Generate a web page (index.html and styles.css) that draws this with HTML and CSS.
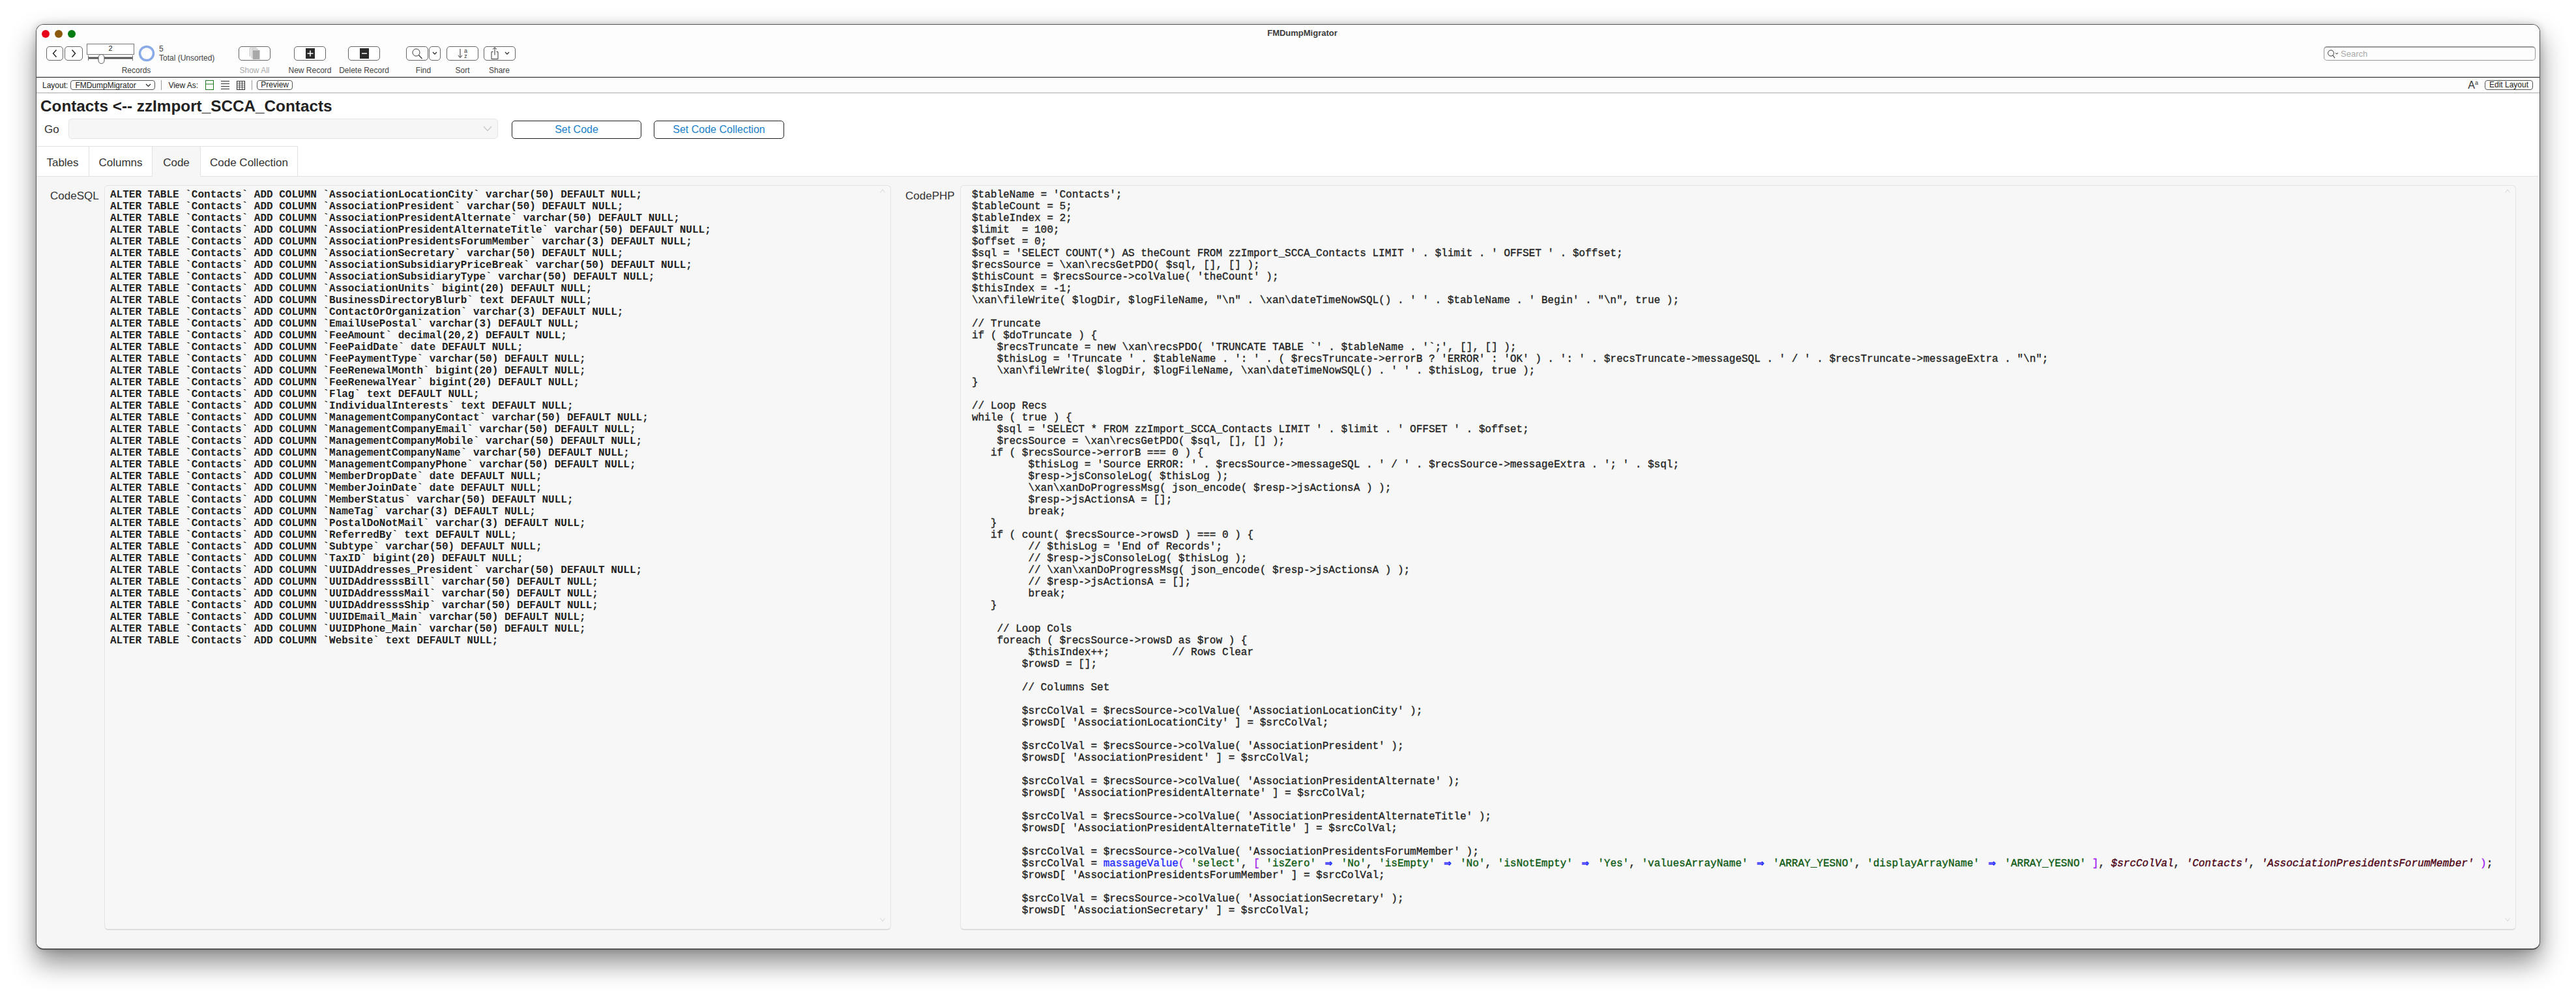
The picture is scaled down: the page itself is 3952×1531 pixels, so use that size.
FILE: index.html
```html
<!DOCTYPE html>
<html lang="en">
<head>
<meta charset="utf-8">
<title>FMDumpMigrator</title>
<link rel="stylesheet" href="styles.css">
</head>
<body>
<div class="window">
  <header class="titlebar">
    <div class="lights"><span class="light red"></span><span class="light amber"></span><span class="light green"></span></div>
    <div class="wintitle">FMDumpMigrator</div>
    <div></div>
  </header>

  <div class="toolbar">
    <div class="tool t-records">
      <div class="records-row">
        <button class="btn nav-prev"><svg width="10" height="14" viewBox="0 0 10 14"><path d="M7.5 1.5 2.5 7l5 5.5" fill="none" stroke="#222" stroke-width="1.4"/></svg></button>
        <button class="btn nav-next"><svg width="10" height="14" viewBox="0 0 10 14"><path d="M2.5 1.5 7.5 7l-5 5.5" fill="none" stroke="#222" stroke-width="1.4"/></svg></button>
        <div class="rec-control">
          <div class="rec-field">2</div>
          <svg class="slider" width="73" height="15" viewBox="0 0 73 15"><rect x="2" y="4.5" width="69" height="3" fill="#555"/><path d="M2.5 2v8M70.5 2v8" stroke="#777"/><rect x="18" y="0.5" width="9" height="14" rx="4.5" fill="#fff" stroke="#555"/></svg>
        </div>
        <svg class="ring" width="26" height="26" viewBox="0 0 26 26"><circle cx="13" cy="13" r="10.5" fill="none" stroke="#8aabe8" stroke-width="3.5"/></svg>
        <div class="rec-count"><div>5</div><div>Total (Unsorted)</div></div>
      </div>
      <div class="tool-label">Records</div>
    </div>

    <div class="tool t-showall">
      <button class="btn tbtn"><svg width="22" height="20" viewBox="0 0 22 20"><path d="M3.5 1.5h10M3.5 1.5v13M6 3.5h10M6 3.5v14" fill="none" stroke="#b5b5b5"/><rect x="7.5" y="5" width="11" height="14" fill="#a8a8a8"/></svg></button>
      <div class="tool-label dim">Show All</div>
    </div>
    <div class="tool t-new">
      <button class="btn tbtn"><svg width="14" height="16" viewBox="0 0 14 16"><rect width="14" height="16" fill="#2b2b2b"/><path d="M7 3.5v9M2.5 8h9" stroke="#fff" stroke-width="1.5"/></svg></button>
      <div class="tool-label">New Record</div>
    </div>
    <div class="tool t-delete">
      <button class="btn tbtn"><svg width="14" height="16" viewBox="0 0 14 16"><rect width="14" height="16" fill="#2b2b2b"/><path d="M3 8h8" stroke="#fff" stroke-width="1.5"/></svg></button>
      <div class="tool-label">Delete Record</div>
    </div>
    <div class="tool t-find">
      <div class="find-row">
        <button class="btn find-btn"><svg width="18" height="18" viewBox="0 0 18 18"><circle cx="7.5" cy="7.5" r="5.5" fill="none" stroke="#333"/><path d="M11.5 11.5l5 5.5" stroke="#333" stroke-width="1.2"/></svg></button>
        <button class="btn find-menu"><svg width="8" height="6" viewBox="0 0 8 6"><path d="M1 1l3 3 3-3" fill="none" stroke="#333" stroke-width="1.4"/></svg></button>
      </div>
      <div class="tool-label">Find</div>
    </div>
    <div class="tool t-sort">
      <button class="btn tbtn sort-btn">
        <svg width="8" height="16" viewBox="0 0 8 16"><path d="M4 1v13M1 11l3 3.5L7 11" fill="none" stroke="#333"/></svg>
        <span class="sort-az"><span>a</span><span>z</span></span>
      </button>
      <div class="tool-label">Sort</div>
    </div>
    <div class="tool t-share">
      <button class="btn tbtn share-btn">
        <svg width="12" height="20" viewBox="0 0 12 20"><path d="M3.5 7.5H1v11h10v-11H8.5M6 12.5V1M3 3.5 6 .8l3 2.7" fill="none" stroke="#333"/></svg>
        <svg class="share-chev" width="8" height="6" viewBox="0 0 8 6"><path d="M1 1l3 3 3-3" fill="none" stroke="#333" stroke-width="1.3"/></svg>
      </button>
      <div class="tool-label">Share</div>
    </div>

    <div class="search">
      <svg width="18" height="16" viewBox="0 0 18 16"><circle cx="6" cy="6.5" r="4.5" fill="none" stroke="#333"/><path d="M9 10l3 4" stroke="#333" stroke-width="1.1"/><path d="M13 6l2 2 2-2" fill="none" stroke="#333"/></svg>
      <span>Search</span>
    </div>
  </div>

  <div class="statusbar">
    <span class="st-label">Layout:</span>
    <div class="layout-select"><span>FMDumpMigrator</span><svg width="9" height="6" viewBox="0 0 9 6"><path d="M1 1l3.5 3.5L8 1" fill="none" stroke="#222" stroke-width="1.2"/></svg></div>
    <span class="st-sep"></span>
    <span class="st-label">View As:</span>
    <svg class="va-first" width="13" height="15" viewBox="0 0 13 15"><rect x=".5" y=".5" width="12" height="14" fill="none" stroke="#1c7a1c"/><path d="M0 6h13" stroke="#1c7a1c"/></svg>
    <svg class="va" width="13" height="15" viewBox="0 0 13 15"><path d="M0 1.5h13M0 5.5h13M0 9.5h13M0 13.5h13" stroke="#333"/></svg>
    <svg class="va" width="13" height="15" viewBox="0 0 13 15"><rect x=".5" y="1.5" width="12" height="13" fill="none" stroke="#333"/><path d="M0 4.5h13M0 7.5h13M0 10.5h13M4.5 2v12M8.5 2v12" stroke="#333" stroke-width=".8"/></svg>
    <span class="st-sep sep2"></span>
    <button class="pill preview">Preview</button>
    <span class="aa">A<sup>a</sup></span>
    <button class="pill edit">Edit Layout</button>
  </div>

  <main class="content">
    <h1 class="heading">Contacts &lt;-- zzImport_SCCA_Contacts</h1>
    <div class="go-row">
      <label class="go-label">Go</label>
      <div class="go-select"><svg width="14" height="9" viewBox="0 0 14 9"><path d="M1 1l6 6.5L13 1" fill="none" stroke="#c8c8c8" stroke-width="1.2"/></svg></div>
      <button class="action a1">Set Code</button>
      <button class="action a2">Set Code Collection</button>
    </div>
    <nav class="tabs">
      <div class="tab tab-tables">Tables</div>
      <div class="tab tab-columns">Columns</div>
      <div class="tab tab-code active">Code</div>
      <div class="tab tab-coll">Code Collection</div>
    </nav>
    <section class="panel">
      <div class="field field-sql">
        <div class="field-label">CodeSQL</div>
        <div class="codebox">
<svg class="sc sc-up" width="8" height="6" viewBox="0 0 8 6"><path d="M.5 5.5 4 .8l3.5 4.7" fill="none" stroke="#d4d4d4"/></svg>
<pre class="code sql">ALTER TABLE `Contacts` ADD COLUMN `AssociationLocationCity` varchar(50) DEFAULT NULL;
ALTER TABLE `Contacts` ADD COLUMN `AssociationPresident` varchar(50) DEFAULT NULL;
ALTER TABLE `Contacts` ADD COLUMN `AssociationPresidentAlternate` varchar(50) DEFAULT NULL;
ALTER TABLE `Contacts` ADD COLUMN `AssociationPresidentAlternateTitle` varchar(50) DEFAULT NULL;
ALTER TABLE `Contacts` ADD COLUMN `AssociationPresidentsForumMember` varchar(3) DEFAULT NULL;
ALTER TABLE `Contacts` ADD COLUMN `AssociationSecretary` varchar(50) DEFAULT NULL;
ALTER TABLE `Contacts` ADD COLUMN `AssociationSubsidiaryPriceBreak` varchar(50) DEFAULT NULL;
ALTER TABLE `Contacts` ADD COLUMN `AssociationSubsidiaryType` varchar(50) DEFAULT NULL;
ALTER TABLE `Contacts` ADD COLUMN `AssociationUnits` bigint(20) DEFAULT NULL;
ALTER TABLE `Contacts` ADD COLUMN `BusinessDirectoryBlurb` text DEFAULT NULL;
ALTER TABLE `Contacts` ADD COLUMN `ContactOrOrganization` varchar(3) DEFAULT NULL;
ALTER TABLE `Contacts` ADD COLUMN `EmailUsePostal` varchar(3) DEFAULT NULL;
ALTER TABLE `Contacts` ADD COLUMN `FeeAmount` decimal(20,2) DEFAULT NULL;
ALTER TABLE `Contacts` ADD COLUMN `FeePaidDate` date DEFAULT NULL;
ALTER TABLE `Contacts` ADD COLUMN `FeePaymentType` varchar(50) DEFAULT NULL;
ALTER TABLE `Contacts` ADD COLUMN `FeeRenewalMonth` bigint(20) DEFAULT NULL;
ALTER TABLE `Contacts` ADD COLUMN `FeeRenewalYear` bigint(20) DEFAULT NULL;
ALTER TABLE `Contacts` ADD COLUMN `Flag` text DEFAULT NULL;
ALTER TABLE `Contacts` ADD COLUMN `IndividualInterests` text DEFAULT NULL;
ALTER TABLE `Contacts` ADD COLUMN `ManagementCompanyContact` varchar(50) DEFAULT NULL;
ALTER TABLE `Contacts` ADD COLUMN `ManagementCompanyEmail` varchar(50) DEFAULT NULL;
ALTER TABLE `Contacts` ADD COLUMN `ManagementCompanyMobile` varchar(50) DEFAULT NULL;
ALTER TABLE `Contacts` ADD COLUMN `ManagementCompanyName` varchar(50) DEFAULT NULL;
ALTER TABLE `Contacts` ADD COLUMN `ManagementCompanyPhone` varchar(50) DEFAULT NULL;
ALTER TABLE `Contacts` ADD COLUMN `MemberDropDate` date DEFAULT NULL;
ALTER TABLE `Contacts` ADD COLUMN `MemberJoinDate` date DEFAULT NULL;
ALTER TABLE `Contacts` ADD COLUMN `MemberStatus` varchar(50) DEFAULT NULL;
ALTER TABLE `Contacts` ADD COLUMN `NameTag` varchar(3) DEFAULT NULL;
ALTER TABLE `Contacts` ADD COLUMN `PostalDoNotMail` varchar(3) DEFAULT NULL;
ALTER TABLE `Contacts` ADD COLUMN `ReferredBy` text DEFAULT NULL;
ALTER TABLE `Contacts` ADD COLUMN `Subtype` varchar(50) DEFAULT NULL;
ALTER TABLE `Contacts` ADD COLUMN `TaxID` bigint(20) DEFAULT NULL;
ALTER TABLE `Contacts` ADD COLUMN `UUIDAddresses_President` varchar(50) DEFAULT NULL;
ALTER TABLE `Contacts` ADD COLUMN `UUIDAddresssBill` varchar(50) DEFAULT NULL;
ALTER TABLE `Contacts` ADD COLUMN `UUIDAddresssMail` varchar(50) DEFAULT NULL;
ALTER TABLE `Contacts` ADD COLUMN `UUIDAddresssShip` varchar(50) DEFAULT NULL;
ALTER TABLE `Contacts` ADD COLUMN `UUIDEmail_Main` varchar(50) DEFAULT NULL;
ALTER TABLE `Contacts` ADD COLUMN `UUIDPhone_Main` varchar(50) DEFAULT NULL;
ALTER TABLE `Contacts` ADD COLUMN `Website` text DEFAULT NULL;</pre>
<svg class="sc sc-down" width="8" height="6" viewBox="0 0 8 6"><path d="M.5.5 4 5.2 7.5.5" fill="none" stroke="#d4d4d4"/></svg>
        </div>
      </div>
      <div class="field field-php">
        <div class="field-label">CodePHP</div>
        <div class="codebox">
<svg class="sc sc-up" width="8" height="6" viewBox="0 0 8 6"><path d="M.5 5.5 4 .8l3.5 4.7" fill="none" stroke="#d4d4d4"/></svg>
<pre class="code php">$tableName = 'Contacts';
$tableCount = 5;
$tableIndex = 2;
$limit  = 100;
$offset = 0;
$sql = 'SELECT COUNT(*) AS theCount FROM zzImport_SCCA_Contacts LIMIT ' . $limit . ' OFFSET ' . $offset;
$recsSource = \xan\recsGetPDO( $sql, [], [] );
$thisCount = $recsSource-&gt;colValue( 'theCount' );
$thisIndex = -1;
\xan\fileWrite( $logDir, $logFileName, "\n" . \xan\dateTimeNowSQL() . ' ' . $tableName . ' Begin' . "\n", true );

// Truncate
if ( $doTruncate ) {
    $recsTruncate = new \xan\recsPDO( 'TRUNCATE TABLE `' . $tableName . '`;', [], [] );
    $thisLog = 'Truncate ' . $tableName . ': ' . ( $recsTruncate-&gt;errorB ? 'ERROR' : 'OK' ) . ': ' . $recsTruncate-&gt;messageSQL . ' / ' . $recsTruncate-&gt;messageExtra . "\n";
    \xan\fileWrite( $logDir, $logFileName, \xan\dateTimeNowSQL() . ' ' . $thisLog, true );
}

// Loop Recs
while ( true ) {
    $sql = 'SELECT * FROM zzImport_SCCA_Contacts LIMIT ' . $limit . ' OFFSET ' . $offset;
    $recsSource = \xan\recsGetPDO( $sql, [], [] );
   if ( $recsSource-&gt;errorB === 0 ) {
         $thisLog = 'Source ERROR: ' . $recsSource-&gt;messageSQL . ' / ' . $recsSource-&gt;messageExtra . '; ' . $sql;
         $resp-&gt;jsConsoleLog( $thisLog );
         \xan\xanDoProgressMsg( json_encode( $resp-&gt;jsActionsA ) );
         $resp-&gt;jsActionsA = [];
         break;
   }
   if ( count( $recsSource-&gt;rowsD ) === 0 ) {
         // $thisLog = 'End of Records';
         // $resp-&gt;jsConsoleLog( $thisLog );
         // \xan\xanDoProgressMsg( json_encode( $resp-&gt;jsActionsA ) );
         // $resp-&gt;jsActionsA = [];
         break;
   }

    // Loop Cols
    foreach ( $recsSource-&gt;rowsD as $row ) {
         $thisIndex++;          // Rows Clear
        $rowsD = [];

        // Columns Set

        $srcColVal = $recsSource-&gt;colValue( 'AssociationLocationCity' );
        $rowsD[ 'AssociationLocationCity' ] = $srcColVal;

        $srcColVal = $recsSource-&gt;colValue( 'AssociationPresident' );
        $rowsD[ 'AssociationPresident' ] = $srcColVal;

        $srcColVal = $recsSource-&gt;colValue( 'AssociationPresidentAlternate' );
        $rowsD[ 'AssociationPresidentAlternate' ] = $srcColVal;

        $srcColVal = $recsSource-&gt;colValue( 'AssociationPresidentAlternateTitle' );
        $rowsD[ 'AssociationPresidentAlternateTitle' ] = $srcColVal;

        $srcColVal = $recsSource-&gt;colValue( 'AssociationPresidentsForumMember' );
        $srcColVal = <span class="fn">massageValue</span><span class="br">(</span> <span class="st">'select'</span>, <span class="br">[</span> <span class="st">'isZero'</span> <span class="ar">⇒</span> <span class="st">'No'</span>, <span class="st">'isEmpty'</span> <span class="ar">⇒</span> <span class="st">'No'</span>, <span class="st">'isNotEmpty'</span> <span class="ar">⇒</span> <span class="st">'Yes'</span>, <span class="st">'valuesArrayName'</span> <span class="ar">⇒</span> <span class="st">'ARRAY_YESNO'</span>, <span class="st">'displayArrayName'</span> <span class="ar">⇒</span> <span class="st">'ARRAY_YESNO'</span> <span class="br">]</span>, <span class="vr">$srcColVal</span>, <span class="vr">'Contacts'</span>, <span class="vr">'AssociationPresidentsForumMember'</span> <span class="br">)</span>;
        $rowsD[ 'AssociationPresidentsForumMember' ] = $srcColVal;

        $srcColVal = $recsSource-&gt;colValue( 'AssociationSecretary' );
        $rowsD[ 'AssociationSecretary' ] = $srcColVal;</pre>
<svg class="sc sc-down" width="8" height="6" viewBox="0 0 8 6"><path d="M.5.5 4 5.2 7.5.5" fill="none" stroke="#d4d4d4"/></svg>
        </div>
      </div>
    </section>
  </main>
</div>
</body>
</html>
```
FILE: styles.css
```css
* { box-sizing: border-box; }
html, body { margin: 0; height: 100%; overflow: hidden; background: #fff; }
body { font-family: "Liberation Sans", Arial, sans-serif; color: #222; }
button { font-family: inherit; margin: 0; padding: 0; background: #fff; }

.window {
  width: 3842px; height: 1420px; margin: 37px 0 0 55px;
  border: 1px solid #555; border-bottom-width: 2px; border-radius: 12px;
  background: #fff; overflow: hidden;
  display: flex; flex-direction: column;
  box-shadow: 0 20px 40px rgba(0,0,0,.45), 0 0 12px rgba(0,0,0,.18);
}

/* title bar */
.titlebar { height: 25px; flex: none; display: grid; grid-template-columns: 1fr auto 1fr; background: #fdfdfd; }
.lights { display: flex; gap: 8px; padding: 8px 0 0 8px; }
.light { width: 12px; height: 12px; border-radius: 50%; }
.red { background: #e6001a; }
.amber { background: #8b5a0c; }
.green { background: #037c12; }
.wintitle { font-size: 13px; font-weight: 700; color: #3c3c3c; line-height: 26px; padding-left: 44px; }

/* toolbar */
.toolbar { height: 55px; flex: none; display: flex; align-items: flex-start; padding: 8px 0 0 15px; background: #fdfdfd; }
.tool { display: flex; flex-direction: column; align-items: center; flex: none; }
.tool-label { font-size: 12px; line-height: 14px; margin-top: 8px; color: #444; white-space: nowrap; }
.tool-label.dim { color: #aaa; }
.btn { height: 22px; border: 1px solid #666; border-radius: 5px; display: flex; align-items: center; justify-content: center; flex: none; }
.tbtn { width: 49px; }

.t-records { width: 276px; }
.records-row { display: flex; align-self: flex-start; height: 22px; align-items: flex-start; }
.nav-prev { width: 26px; }
.nav-next { width: 28px; margin-left: 2px; }
.rec-control { width: 73px; margin: -4px 0 0 6px; display: flex; flex-direction: column; flex: none; }
.rec-field { height: 17px; border: 1px solid #777; font-size: 11px; line-height: 13px; text-align: center; background: #fff; }
.slider { display: block; margin-top: -1px; }
.ring { margin: -2px 0 0 6px; flex: none; }
.rec-count { margin: -3px 0 0 6px; font-size: 12px; line-height: 14px; color: #444; white-space: nowrap; }

.t-showall { width: 49px; margin-left: 19px; }
.t-new { width: 49px; margin-left: 36px; }
.t-delete { width: 49px; margin-left: 34px; }
.t-find { width: 53px; margin-left: 40px; }
.t-sort { width: 49px; margin-left: 9px; }
.t-share { width: 48px; margin-left: 8px; }
.find-row { display: flex; gap: 1px; }
.find-btn { width: 34px; }
.find-menu { width: 18px; }
.sort-btn { gap: 2px; }
.sort-az { display: flex; flex-direction: column; font-size: 9px; line-height: 8px; color: #333; }
.share-btn { gap: 9px; padding-left: 2px; }

.search {
  margin: 0 6px 0 auto; width: 325px; height: 22px;
  border: 1px solid #999; border-top-width: 2px; border-radius: 5px;
  display: flex; align-items: center; gap: 3px; padding-left: 4px;
  font-size: 13px; color: #aaa;
}

/* status bar */
.statusbar {
  height: 25px; flex: none; display: flex; align-items: center;
  border-top: 1px solid #111; border-bottom: 1px solid #aaa;
  padding-left: 9px; font-size: 12px; color: #222; background: #fdfdfd;
}
.st-label { white-space: nowrap; }
.layout-select {
  width: 130px; height: 15px; margin-left: 4px; border: 1px solid #555; border-radius: 4px;
  display: flex; align-items: center; justify-content: space-between; padding: 0 5px 0 6px;
}
.st-sep { width: 1px; height: 15px; background: #999; margin: 0 10px 0 9px; }
.sep2 { margin: 0 7px 0 10px; }
.va-first { margin-left: 11px; }
.va { margin-left: 11px; }
.pill { height: 15px; border: 1px solid #555; border-radius: 4px; font-size: 12px; line-height: 13px; color: #222; }
.preview { width: 55px; }
.aa { margin-left: auto; font-size: 16px; line-height: 16px; color: #333; }
.aa sup { font-size: 9px; vertical-align: 6px; line-height: 0; }
.edit { width: 74px; margin: 0 10px 0 10px; }

/* content */
.content { flex: 1; min-height: 0; display: flex; flex-direction: column; }
.heading { margin: 0; height: 39px; padding-left: 6px; font-size: 24.3px; line-height: 40px; font-weight: 700; color: #222; white-space: nowrap; }
.go-row { height: 31px; flex: none; display: flex; align-items: flex-end; }
.go-label { width: 49px; height: 31px; padding-left: 12px; font-size: 17px; line-height: 34px; color: #333; flex: none; }
.go-select {
  width: 659px; height: 31px; flex: none; background: #f6f6f6; border: 1px solid #e4e4e4; border-radius: 5px;
  display: flex; align-items: center; justify-content: flex-end; padding-right: 8px;
}
.action { height: 28px; border: 1px solid #222; border-radius: 5px; font-size: 16px; color: #1a80c8; flex: none; }
.a1 { width: 199px; margin-left: 21px; }
.a2 { width: 200px; margin-left: 19px; }

.tabs { height: 47px; flex: none; margin: 11px 2px 0 0; display: flex; border-bottom: 1px solid #e2e2e2; }
.tab { height: 46px; border-top: 1px solid #e2e2e2; border-right: 1px solid #e2e2e2; font-size: 17px; line-height: 50px; color: #333; text-align: center; flex: none; }
.tab-tables { width: 81px; }
.tab-columns { width: 97px; }
.tab-code { width: 74px; }
.tab-coll { width: 149px; }
.tab.active { background: #f6f6f6; height: 47px; margin-bottom: -1px; position: relative; }

.panel { flex: 1; min-height: 0; margin-right: 2px; background: #f6f6f6; display: flex; padding: 13px 34px 28px 21px; gap: 22px; }
.field { display: flex; flex: none; }
.field-sql { width: 1290px; }
.field-php { width: 2471px; }
.field-label { flex: none; font-size: 17px; line-height: 20px; padding-top: 7px; color: #333; white-space: nowrap; }
.field-sql .field-label { width: 83px; }
.field-php .field-label { width: 84px; }
.codebox { flex: 1; min-width: 0; position: relative; background: #f7f7f7; border: 1px solid #e4e4e4; border-bottom: 2px solid #ddd; border-radius: 6px; overflow: hidden; }
.code { margin: 0; font-family: "Liberation Mono", "Courier New", monospace; font-size: 16px; line-height: 18px; color: #222; }
.sql { font-weight: 700; padding: 5px 0 0 8px; }
.php { font-weight: 400; -webkit-text-stroke: .35px #222; padding: 5px 0 0 17px; }
.sc { position: absolute; right: 8px; }
.sc-up { top: 5px; }
.sc-down { bottom: 11px; }

.fn { color: #1f2bff; -webkit-text-stroke-color: #1f2bff; }
.br { color: #a21cf0; -webkit-text-stroke-color: #a21cf0; }
.st { color: #0d5a12; -webkit-text-stroke-color: #0d5a12; }
.vr { color: #4a0012; font-style: italic; -webkit-text-stroke-color: #4a0012; }
.ar { display: inline-block; width: 19.2px; text-align: center; color: #2a2aff; -webkit-text-stroke-color: #2a2aff; font-family: "DejaVu Sans", sans-serif; font-weight: 700; font-size: 14px; line-height: 14px; }
```
